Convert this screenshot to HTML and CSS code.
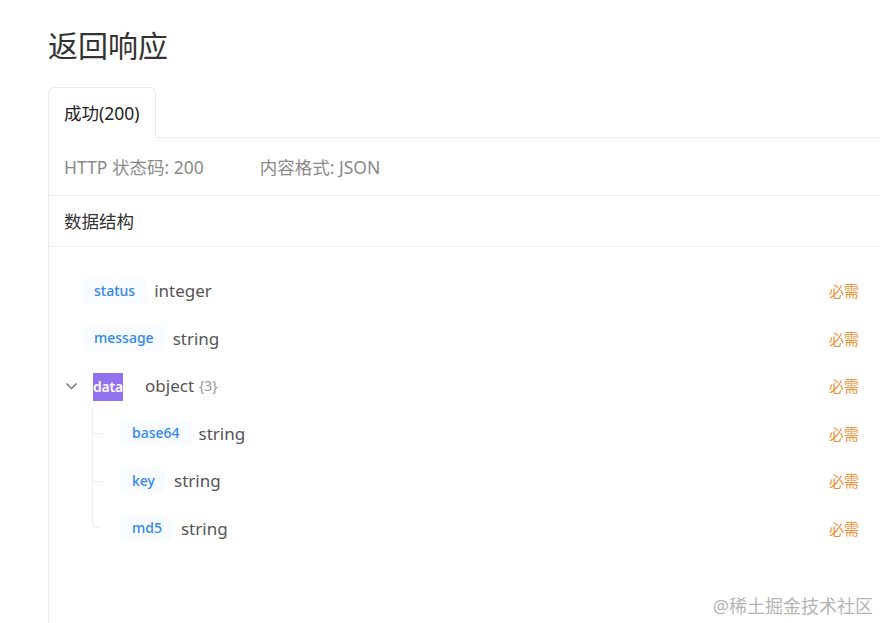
FILE: index.html
```html
<!DOCTYPE html>
<html lang="zh-CN">
<head>
    <meta charset="UTF-8">
    <meta name="viewport" content="width=device-width, initial-scale=1.0">
    <title>返回响应</title>
    <link rel="stylesheet" href="styles.css">
</head>
<body>
    <div class="page">
        <h1>返回响应</h1>

        <div class="tabs">
            <div class="tab active">成功(200)</div>
        </div>

        <div class="panel">
            <div class="meta">
                <span class="meta-item">HTTP 状态码: 200</span>
                <span class="meta-item">内容格式: JSON</span>
            </div>
            <div class="section-title">数据结构</div>

            <div class="tree">
                <div class="row">
                    <span class="toggle"></span>
                    <span class="field">status</span>
                    <span class="type">integer</span>
                    <span class="required">必需</span>
                </div>
                <div class="row">
                    <span class="toggle"></span>
                    <span class="field">message</span>
                    <span class="type">string</span>
                    <span class="required">必需</span>
                </div>
                <div class="row">
                    <span class="toggle">
                        <svg width="13" height="13" viewBox="0 0 13 13"><path d="M1.5 4.5 L6.5 9.5 L11.5 4.5" fill="none" stroke="#777" stroke-width="1.5"/></svg>
                    </span>
                    <span class="field field-object"><mark>data</mark></span>
                    <span class="type type-object">object</span>
                    <span class="count">{3}</span>
                    <span class="required">必需</span>
                </div>
                <div class="children">
                    <div class="row child">
                        <span class="field">base64</span>
                        <span class="type">string</span>
                        <span class="required">必需</span>
                    </div>
                    <div class="row child">
                        <span class="field">key</span>
                        <span class="type">string</span>
                        <span class="required">必需</span>
                    </div>
                    <div class="row child">
                        <span class="field">md5</span>
                        <span class="type">string</span>
                        <span class="required">必需</span>
                    </div>
                </div>
            </div>
        </div>
    </div>

    <div class="watermark">@稀土掘金技术社区</div>
</body>
</html>
```

FILE: styles.css
```css
body {
    margin: 0;
    font-family: "Noto Sans", "Noto Sans CJK SC", sans-serif;
    color: #333;
    background: #fff;
    overflow: hidden;
}
.page {
    display: flex;
    flex-direction: column;
    box-sizing: border-box;
    height: 623px;
    padding: 25px 0 0 48px;
}
h1 {
    margin: 0 0 21px;
    font-size: 30px;
    line-height: 41px;
    font-weight: 400;
    color: #333;
}
.tabs {
    display: flex;
    border-bottom: 1px solid #eaeaea;
}
.tab {
    height: 49px;
    line-height: 50px;
    padding: 0 15px;
    margin-bottom: -1px;
    border: 1px solid #eaeaea;
    border-bottom-color: #fff;
    border-radius: 6px 6px 0 0;
    font-size: 17.5px;
    color: #222;
    background: #fff;
}
.panel {
    flex: 1;
    border-left: 1px solid #eaeaea;
}
.meta {
    display: flex;
    align-items: center;
    height: 57px;
    padding: 0 15px;
    border-bottom: 1px solid #eeeeee;
    font-size: 17.5px;
    color: #8a8a8a;
}
.meta-item {
    margin-right: 56px;
}
.section-title {
    height: 50px;
    line-height: 50px;
    padding: 0 15px;
    border-bottom: 1px solid #eeeeee;
    font-size: 17.5px;
    color: #333;
}
.tree {
    padding: 20px 21px 0 10px;
}
.row {
    display: flex;
    align-items: center;
    height: 47.5px;
}
.toggle {
    width: 24px;
    display: flex;
    justify-content: center;
    align-items: center;
}
.field {
    height: 26px;
    line-height: 26px;
    padding: 0 11px;
    border-radius: 4px;
    background: #f8fbff;
    color: #3188ec;
    font-size: 14px;
    font-weight: 500;
}
.field-object {
    background: transparent;
    padding: 0 10px;
}
.field-object mark {
    display: inline-block;
    height: 28px;
    line-height: 28px;
    padding: 0;
    background: #9271ee;
    color: #fff;
    font-weight: 600;
    letter-spacing: -0.2px;
}
.type {
    margin-left: 8px;
    font-size: 17px;
    color: #555;
}
.type-object {
    margin-left: 12px;
}
.count {
    margin-left: 5px;
    font-size: 14px;
    color: #999;
}
.required {
    margin-left: auto;
    font-size: 15px;
    color: #f0913a;
}
.children {
    margin-left: 33px;
}
.child {
    position: relative;
    padding-left: 29px;
}
.child::before {
    content: "";
    position: absolute;
    left: 0;
    top: 0;
    bottom: 0;
    border-left: 1px solid #ececec;
}
.child::after {
    content: "";
    position: absolute;
    left: 0;
    top: 50%;
    width: 11px;
    border-top: 1px solid #ececec;
}
.child:last-child::before {
    bottom: 50%;
    width: 6px;
    border-bottom: 1px solid #ececec;
    border-bottom-left-radius: 4px;
}
.child:last-child::after {
    display: none;
}
.watermark {
    position: absolute;
    right: 7px;
    bottom: 5px;
    font-size: 18px;
    color: #b4b4b4;
}
```
